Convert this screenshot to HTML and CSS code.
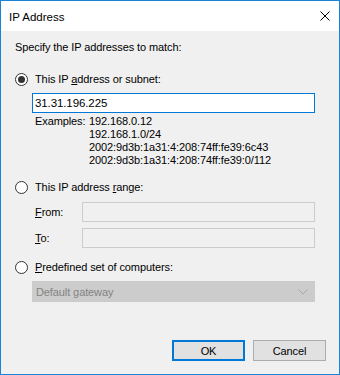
FILE: index.html
```
<!DOCTYPE html>
<html>
<head>
<meta charset="utf-8">
<link rel="stylesheet" href="styles.css">
</head>
<body>
<div class="window">
  <div class="titlebar">
    <span class="title">IP Address</span>
    <svg class="close" width="10" height="10" viewBox="0 0 10 10"><path d="M0.5 0.5 L9.5 9.5 M9.5 0.5 L0.5 9.5" stroke="#000" stroke-width="1" fill="none"/></svg>
  </div>
  <div class="content">
    <div class="intro">Specify the IP addresses to match:</div>

    <div class="radio-row r1">
      <span class="radio checked"></span>
      <span class="label">This IP <u>a</u>ddress or subnet:</span>
    </div>
    <div class="textbox focus">31.31.196.225</div>
    <div class="examples">
      <span class="ex-label">Examples:</span>
      <div class="ex-list">
        <div>192.168.0.12</div>
        <div>192.168.1.0/24</div>
        <div>2002:9d3b:1a31:4:208:74ff:fe39:6c43</div>
        <div>2002:9d3b:1a31:4:208:74ff:fe39:0/112</div>
      </div>
    </div>

    <div class="radio-row r2">
      <span class="radio"></span>
      <span class="label">This IP address <u>r</u>ange:</span>
    </div>
    <div class="field-row f1">
      <span class="field-label"><u>F</u>rom:</span>
      <div class="textbox disabled"></div>
    </div>
    <div class="field-row f2">
      <span class="field-label"><u>T</u>o:</span>
      <div class="textbox disabled"></div>
    </div>

    <div class="radio-row r3">
      <span class="radio"></span>
      <span class="label"><u>P</u>redefined set of computers:</span>
    </div>
    <div class="combo">
      <span>Default gateway</span>
      <svg class="chev" width="10" height="6" viewBox="0 0 10 6"><path d="M0.5 0.5 L5 5 L9.5 0.5" stroke="#a6a6a6" stroke-width="1" fill="none"/></svg>
    </div>

    <div class="buttons">
      <div class="btn default">OK</div>
      <div class="btn">Cancel</div>
    </div>
  </div>
</div>
</body>
</html>
```
FILE: styles.css
```
html, body {
  margin: 0;
  padding: 0;
}
body {
  font-family: "Liberation Sans", Arial, sans-serif;
  font-size: 11px;
  letter-spacing: -0.1px;
  color: #000;
  background: #f0f0f0;
}
.window {
  width: 340px;
  height: 375px;
  box-sizing: border-box;
  border: 1px solid #1883d7;
  background: #f0f0f0;
  display: flex;
  flex-direction: column;
}
.titlebar {
  height: 30px;
  background: #fff;
  display: flex;
  align-items: center;
  justify-content: space-between;
  padding: 0 9px 0 8px;
  flex: none;
}
.title {
  font-size: 11.5px;
  line-height: 16px;
  padding-top: 1px;
  letter-spacing: 0;
}
.close {
  display: block;
}
.content {
  flex: 1;
  display: flex;
  flex-direction: column;
  padding: 0 24px 13px 14px;
  line-height: 16px;
}
.intro {
  margin-top: 8px;
}
.radio-row {
  display: flex;
  align-items: center;
  height: 16px;
}
.r1 { margin-top: 16px; }
.r2 { margin-top: 12px; }
.r3 { margin-top: 11px; }
.radio {
  width: 13px;
  height: 13px;
  box-sizing: border-box;
  border: 1px solid #333;
  border-radius: 50%;
  background: #fff;
  display: flex;
  align-items: center;
  justify-content: center;
  flex: none;
}
.radio.checked::after {
  content: "";
  width: 7px;
  height: 7px;
  border-radius: 50%;
  background: #333;
}
.label {
  margin-left: 7px;
}
u {
  text-decoration: underline;
  text-underline-offset: 1px;
}
.textbox {
  box-sizing: border-box;
  height: 20px;
  border: 1px solid #7a7a7a;
  background: #fff;
  padding: 0 2px;
  line-height: 18px;
  font-size: 11.5px;
}
.textbox.focus {
  margin: 6px 0 0 17px;
  border-color: #0078d7;
}
.textbox.disabled {
  flex: 1;
  border-color: #cccccc;
  background: #f0f0f0;
}
.examples {
  display: flex;
  margin: 2px 0 0 20px;
  line-height: 13px;
}
.ex-label {
  width: 54px;
  flex: none;
  white-space: nowrap;
}
.field-row {
  display: flex;
  align-items: center;
  margin-left: 20px;
}
.f1 { margin-top: 7px; }
.f2 { margin-top: 6px; }
.field-label {
  width: 47px;
  flex: none;
}
.combo {
  margin: 6px 0 0 17px;
  height: 21px;
  box-sizing: border-box;
  background: #cccccc;
  border: 1px solid #cccccc;
  color: #838383;
  display: flex;
  align-items: center;
  justify-content: space-between;
  padding: 0 6px 0 3px;
}
.chev {
  display: block;
}
.buttons {
  margin-top: auto;
  margin-right: -11px;
  display: flex;
  justify-content: flex-end;
  gap: 8px;
}
.btn {
  width: 73px;
  height: 21px;
  box-sizing: border-box;
  background: #e1e1e1;
  border: 1px solid #adadad;
  display: flex;
  align-items: center;
  justify-content: center;
}
.btn.default {
  border: 2px solid #0078d7;
}
```
